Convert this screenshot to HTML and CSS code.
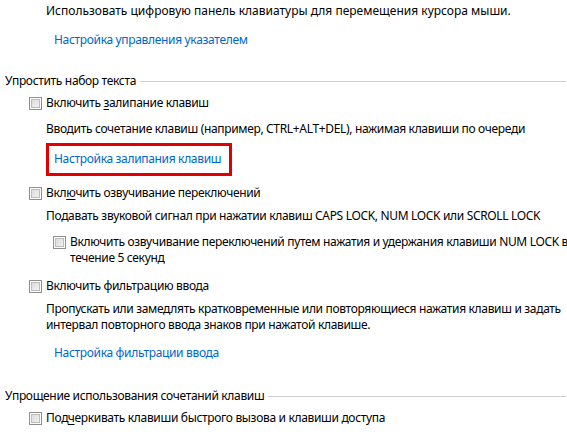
FILE: index.html
```html
<!DOCTYPE html>
<html lang="ru">
<head>
    <meta charset="UTF-8">
    <title>Облегчение работы с клавиатурой</title>
    <link rel="stylesheet" href="styles.css">
</head>
<body>
    <div class="page">
        <p class="desc top">Использовать цифровую панель клавиатуры для перемещения курсора мыши.</p>
        <p class="link-row first"><a href="#">Настройка управления указателем</a></p>

        <div class="group">Упростить набор текста</div>
        <label class="check"><span class="box"></span><span>Включить <u>з</u>алипание клавиш</span></label>
        <p class="desc wide">Вводить сочетание клавиш (например, CTRL+ALT+DEL), нажимая клавиши по очереди</p>
        <div class="marked"><a href="#">Настройка залипания клавиш</a></div>

        <label class="check after-box"><span class="box"></span><span>Вкл<u>ю</u>чить озвучивание переключений</span></label>
        <p class="desc">Подавать звуковой сигнал при нажатии клавиш CAPS LOCK, NUM LOCK или SCROLL LOCK</p>
        <label class="check sub"><span class="box"></span><span>Включить озвучивание переключений путем нажатия и удержания клавиши NUM LOCK в<br>течение 5 секунд</span></label>

        <label class="check spaced"><span class="box"></span><span>Включить фильтрацию ввода</span></label>
        <p class="desc">Пропускать или замедлять кратковременные или повторяющиеся нажатия клавиш и задать<br>интервал повторного ввода знаков при нажатой клавише.</p>
        <p class="link-row"><a href="#">Настройка фильтрации ввода</a></p>

        <div class="group second">Упрощение использования сочетаний клавиш</div>
        <label class="check"><span class="box"></span><span>Под<u>ч</u>еркивать клавиши быстрого вызова и клавиши доступа</span></label>
    </div>
</body>
</html>
```

FILE: styles.css
```css
body {
    margin: 0;
    background: #ffffff;
    color: #000000;
    font-family: 'Noto Sans', sans-serif;
    font-size: 12px;
    line-height: 16px;
    letter-spacing: -0.33px;
    overflow: hidden;
}
.page {
    padding: 3px 1px 0 5px;
}
p {
    margin: 0;
}
a {
    color: #0066cc;
    text-decoration: none;
}
u {
    text-decoration-thickness: 1px;
    text-underline-offset: 2px;
}
.desc {
    margin: 7px 0 0 41px;
    white-space: nowrap;
}
.desc.top {
    margin-top: 0;
    letter-spacing: 0;
}
.desc.wide {
    margin-top: 10px;
}
.link-row {
    margin: 12px 0 0 49px;
}
.link-row.first {
    margin-top: 13px;
}
.group {
    display: flex;
    align-items: center;
    margin-top: 25px;
}
.group::after {
    content: "";
    flex: 1;
    border-top: 1px solid #cfcfcf;
    margin: 1px 0 0 4px;
}
.group.second {
    margin-top: 27px;
}
.check {
    display: flex;
    align-items: flex-start;
    margin: 6px 0 0 24px;
    white-space: nowrap;
}
.check .box {
    flex: none;
    width: 11px;
    height: 11px;
    margin: 2px 4px 0 0;
    border: 1px solid #8e8f8f;
    background: linear-gradient(135deg, #d6d6d6, #f8f8f8);
    box-shadow: inset 0 0 0 1px #ffffff, inset 0 0 0 2px #bcbcbc;
}
.check.after-box {
    margin-top: 9px;
}
.check.sub {
    margin: 10px 0 0 48px;
}
.check.spaced {
    margin-top: 12px;
}
.marked {
    width: fit-content;
    margin: 6px 0 0 41px;
    padding: 5px 8px 6px 5px;
    border: 3px solid #e00000;
    white-space: nowrap;
}
```
